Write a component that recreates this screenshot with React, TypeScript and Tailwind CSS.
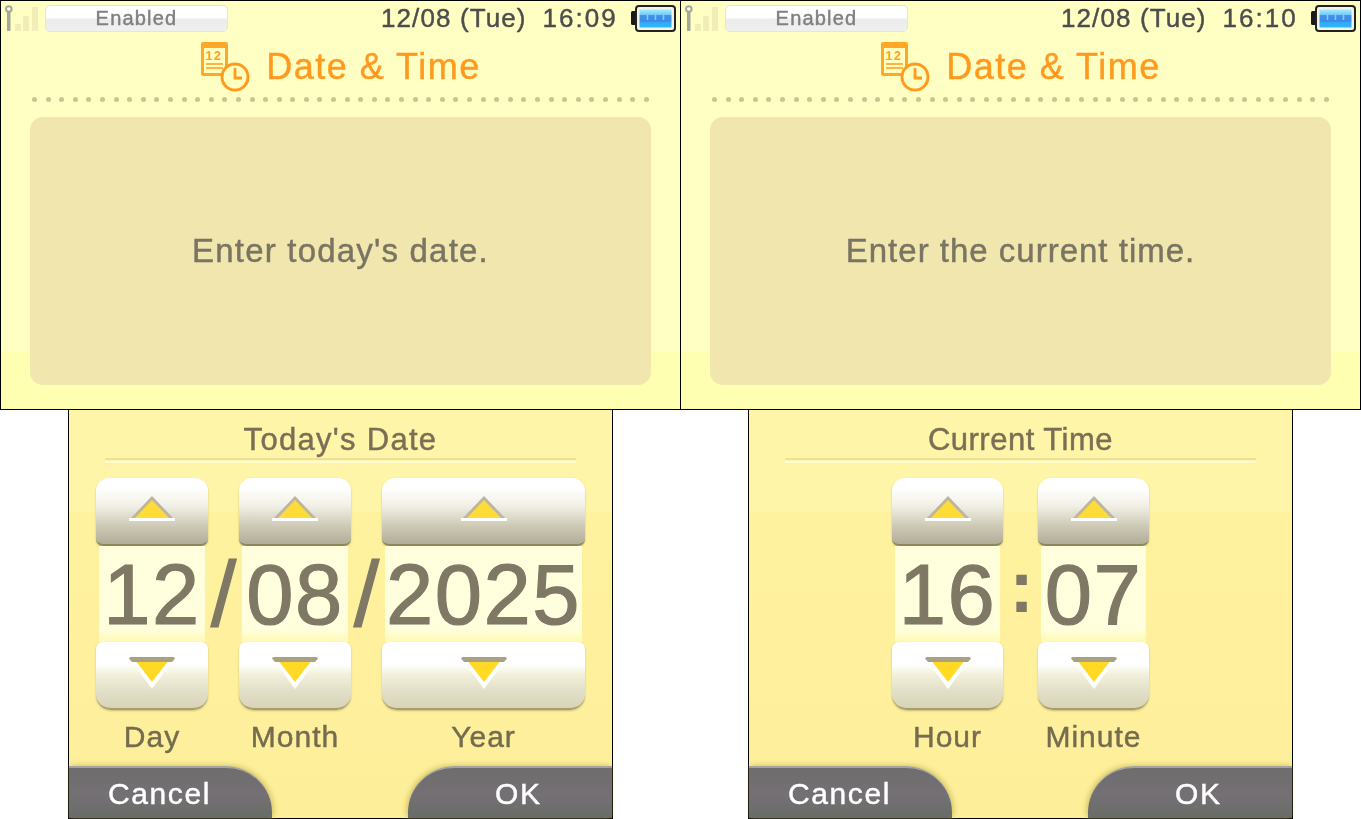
const fontClass = "font-['Liberation_Sans',sans-serif]";
const softText = "[-webkit-text-stroke:0.45px_currentColor] blur-[0.3px]";
const bigText = "[-webkit-text-stroke:1.2px_currentColor] blur-[0.3px]";

function SignalIcon() {
  return (
    <svg width="38" height="28" viewBox="0 0 38 28" className="shrink-0">
      <rect x="14" y="20" width="6" height="7" fill="#f0edb8" />
      <rect x="22" y="12" width="6" height="15" fill="#f0edb8" />
      <rect x="31" y="3" width="6" height="24" fill="#f0edb8" />
      <rect x="6" y="6" width="3.5" height="21" rx="1" fill="#a6a69a" />
      <circle cx="7.8" cy="5" r="2.8" fill="#ffffe0" stroke="#a6a69a" strokeWidth="2" />
    </svg>
  );
}

function BatteryIcon() {
  return (
    <svg width="46" height="28" viewBox="0 0 46 28" className="shrink-0">
      <defs>
        <linearGradient id="cell" x1="0" y1="0" x2="0" y2="1">
          <stop offset="0" stopColor="#a8ecff" />
          <stop offset="0.28" stopColor="#74ccfa" />
          <stop offset="0.32" stopColor="#3f94e8" />
          <stop offset="0.66" stopColor="#3f88e4" />
          <stop offset="0.7" stopColor="#30a8f8" />
          <stop offset="1" stopColor="#30b8fc" />
        </linearGradient>
      </defs>
      <rect x="0" y="7" width="6" height="14" rx="1.5" fill="#1a1a1a" />
      <rect x="5" y="2" width="39" height="25" rx="3" fill="#f4f4e4" stroke="#222" strokeWidth="2" />
      <rect x="8.5" y="5.5" width="32" height="18" fill="url(#cell)" />
      <path d="M16.5 10v6M24.5 10v6M32.5 10v6" stroke="#8cc4f4" strokeWidth="1.5" />
    </svg>
  );
}

function DateTimeIcon() {
  return (
    <svg width="50" height="50" viewBox="0 0 50 50" className="shrink-0">
      <rect x="1" y="0" width="27" height="34" rx="2" fill="#ffa726" />
      <rect x="4" y="6" width="21" height="25" fill="#ffffc0" />
      <text x="14" y="18" textAnchor="middle" fontSize="12.5" fontWeight="700" fill="#ffa02c">12</text>
      <path d="M6 22h17M6 26h17" stroke="#ff9a1f" strokeWidth="1.6" />
      <circle cx="35" cy="35" r="13" fill="#ffffc0" stroke="#ff9a1f" strokeWidth="3" />
      <path d="M35 26v10h7" fill="none" stroke="#ff9a1f" strokeWidth="2.8" />
    </svg>
  );
}

function UpArrow() {
  return (
    <svg width="48" height="28" viewBox="0 0 48 28" className="blur-[0.5px]">
      <path d="M24 1 2 24h44z" fill="#bdb69e" />
      <path d="M24 5 6 24h36z" fill="#ffdb3a" />
      <rect x="1" y="23" width="46" height="3" fill="#ffffff" />
    </svg>
  );
}

function DownArrow() {
  return (
    <svg width="48" height="34" viewBox="0 0 48 34" className="blur-[0.5px]">
      <path d="M3 4h42L24 33z" fill="#ffffff" />
      <path d="M7 4h34L24 26z" fill="#ffd924" />
      <path d="M1 2.5 Q1 1 3 1H45 Q47 1 47 2.5L44 6H4z" fill="#a8a283" />
    </svg>
  );
}

function Spinner({ value, label, width }: { value: string; label: string; width: string }) {
  return (
    <div className={`flex flex-col ${width}`}>
      <button className="h-[68px] rounded-t-[13px] rounded-b-[7px] border-b-2 border-[#8f8758] bg-[linear-gradient(to_bottom,#ffffff_0%,#ffffff_14%,#f2f0e6_42%,#ccc8b4_74%,#b2ad98_100%)] shadow-[0_1px_2px_#c9bc7a] flex items-center justify-center pb-1">
        <UpArrow />
      </button>
      <div className="h-[96px] mx-[3px] bg-[linear-gradient(to_bottom,#ffffde_0%,#ffffde_86%,#fff9b4_100%)] flex items-center justify-center text-[85px] leading-none tracking-[1.5px] text-[#7f7865] whitespace-nowrap">
        <span className={bigText}>{value}</span>
      </div>
      <button className="h-[68px] rounded-t-[7px] rounded-b-[15px] border-b-2 border-[#a89e66] bg-[linear-gradient(to_bottom,#ffffff_0%,#ffffff_34%,#f2f0da_50%,#e2dfc8_75%,#d8d4b8_100%)] shadow-[0_1px_2px_#c9bc7a] flex items-start justify-center pt-[14px]">
        <DownArrow />
      </button>
      <div className="h-[52px] flex items-center justify-center text-[30px] tracking-[1px] text-[#756c50] whitespace-nowrap">
        <span className={softText}>{label}</span>
      </div>
    </div>
  );
}

function Slash({ width }: { width: string }) {
  return (
    <div className={`${width} h-[232px] flex items-center justify-center text-[92px] leading-none text-[#7f7865]`}>
      <span className={bigText}>/</span>
    </div>
  );
}

function Colon({ width }: { width: string }) {
  return (
    <div className={`${width} h-[232px] flex items-center justify-center text-[74px] font-bold leading-none text-[#7f7865]`}>
      <span className="-translate-y-[7px] translate-x-[1px]">:</span>
    </div>
  );
}

function TopScreen({ time, message, messageClass, className }: { time: string; message: string; messageClass: string; className: string }) {
  return (
    <div className={`h-[410px] border-black flex flex-col bg-[linear-gradient(to_bottom,#ffffc4_0%,#ffffc4_86%,#ffffb2_86%,#ffffb2_100%)] ${className}`}>
      {/* status bar */}
      <div className="h-[34px] flex items-center pr-[3px]">
        <SignalIcon />
        <div className="ml-[6px] w-[183px] h-[27px] rounded-[5px] border border-[#e6e6d8] bg-[linear-gradient(to_bottom,#ffffff_0%,#ffffff_45%,#ececec_55%,#f0f0f0_100%)] flex items-center justify-center text-[20px] tracking-[1.2px] text-[#808080]">
          <span className={softText}>Enabled</span>
        </div>
        <div className={`ml-[153px] text-[26px] tracking-[1.1px] text-[#4d4d4d] whitespace-nowrap ${softText}`}>12/08 (Tue)</div>
        <div className={`ml-[16px] text-[26px] tracking-[2px] text-[#4d4d4d] whitespace-nowrap ${softText}`}>{time}</div>
        <div className="ml-auto">
          <BatteryIcon />
        </div>
      </div>

      {/* title */}
      <div className="h-[56px] mt-[4px] flex items-center justify-center gap-[16px] text-[36px] tracking-[1.5px] text-[#ff9a1f]">
        <DateTimeIcon />
        <span className={softText}>Date &amp; Time</span>
      </div>

      {/* dots */}
      <div className="mt-[2px] mx-[31px] flex justify-between">
        {Array.from({ length: 46 }).map((_, i) => (
          <span key={i} className="w-[5px] h-[5px] rounded-full bg-[#cdc294]" />
        ))}
      </div>

      {/* message panel */}
      <div className={`mt-[15px] ml-[29px] w-[621px] h-[268px] rounded-[13px] bg-[#f0e6ae] flex items-center justify-center text-[33px] text-[#7a7462] ${messageClass}`}>
        <span className={softText}>{message}</span>
      </div>
    </div>
  );
}

function BottomScreen({ title, titleClass, children, className }: { title: string; titleClass: string; children: React.ReactNode; className: string }) {
  return (
    <div className={`w-[545px] h-[409px] border-x border-b border-black flex flex-col bg-[linear-gradient(to_bottom,#fff5a8_0%,#fff5a8_25%,#fff29e_25%,#fdee9a_100%)] ${className}`}>
      <div className={`h-[48px] flex items-end justify-center pb-[3px] text-[31px] leading-none text-[#7a6f55] ${titleClass}`}>
        <span className={softText}>{title}</span>
      </div>
      <div className="mx-[36px] h-[5px] border-t-2 border-b-2 border-t-[#ece09a] border-b-[#fffbd0]" />
      <div className="mt-[15px] flex justify-center">{children}</div>
      <div className="mt-auto flex justify-between">
        <button className="w-[203px] h-[52px] rounded-tr-[46px] border-t-2 border-[#a6a49e] bg-[linear-gradient(to_bottom,#6f6d6e_0%,#747074_55%,#696c67_100%)] shadow-[2px_-1px_5px_#d8c868] text-[30px] tracking-[1.6px] text-white text-left pl-[39px]">
          <span className={softText}>Cancel</span>
        </button>
        <button className="w-[204px] h-[52px] rounded-tl-[46px] border-t-2 border-[#a6a49e] bg-[linear-gradient(to_bottom,#6f6d6e_0%,#747074_55%,#696c67_100%)] shadow-[-2px_-1px_5px_#d8c868] text-[30px] tracking-[1.6px] text-white text-left pl-[87px]">
          <span className={softText}>OK</span>
        </button>
      </div>
    </div>
  );
}

export default function App() {
  return (
    <div className={`w-[1361px] h-[819px] bg-white overflow-hidden ${fontClass}`}>
      <div className="flex">
        <TopScreen time="16:09" message="Enter today's date." messageClass="tracking-[1.2px]" className="w-[680px] border-l border-y" />
        <TopScreen time="16:10" message="Enter the current time." messageClass="tracking-[1px]" className="w-[681px] border" />
      </div>
      <div className="flex">
        <BottomScreen title="Today's Date" titleClass="tracking-[1.3px]" className="ml-[68px]">
          <Spinner value="12" label="Day" width="w-[112px]" />
          <Slash width="w-[31px]" />
          <Spinner value="08" label="Month" width="w-[112px]" />
          <Slash width="w-[31px]" />
          <Spinner value="2025" label="Year" width="w-[203px]" />
        </BottomScreen>
        <BottomScreen title="Current Time" titleClass="tracking-[0.5px]" className="ml-[135px]">
          <Spinner value="16" label="Hour" width="w-[111px]" />
          <Colon width="w-[35px]" />
          <Spinner value="07" label="Minute" width="w-[111px]" />
        </BottomScreen>
      </div>
    </div>
  );
}
